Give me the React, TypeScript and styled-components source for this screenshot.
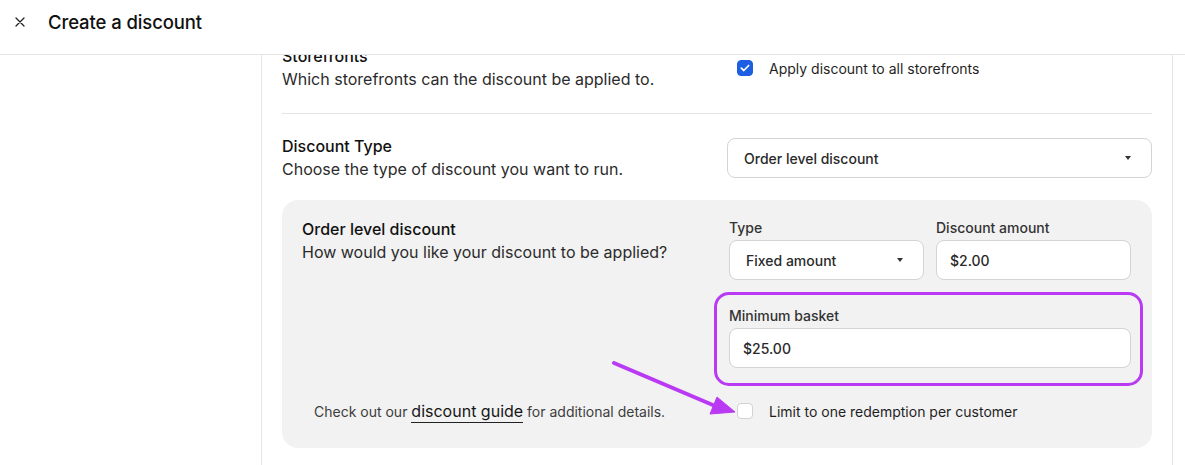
import React from "react";
import styled, { createGlobalStyle } from "styled-components";

const Global = createGlobalStyle`
  * { box-sizing: border-box; }
  html, body { margin: 0; padding: 0; background: #fff; }
  body {
    font-family: Inter, "Noto Sans", "Liberation Sans", sans-serif;
    color: #1a1a1a;
    -webkit-font-smoothing: antialiased;
  }
`;

const Page = styled.div`
  width: 1185px;
  height: 465px;
  overflow: hidden;
  display: flex;
  flex-direction: column;
`;

const Header = styled.header`
  height: 55px;
  flex: none;
  display: flex;
  align-items: flex-start;
  padding: 11px 0 0 14px;
  gap: 22px;
  border-bottom: 1px solid #e6e6e6;
`;

const CloseButton = styled.button`
  width: 12px;
  height: 22px;
  padding: 0;
  border: 0;
  background: none;
  display: flex;
  align-items: center;
  justify-content: center;
  color: #222;
`;

const Title = styled.h1`
  margin: 0;
  font-size: 18.5px;
  line-height: 22px;
  font-weight: 500;
  letter-spacing: -0.1px;
  color: #111;
`;

const Body = styled.div`
  flex: 1;
  display: flex;
  min-height: 0;
`;

const Sidebar = styled.aside`
  width: 262px;
  flex: none;
  border-right: 1px solid #e6e6e6;
`;

const Main = styled.main`
  width: 911px;
  flex: none;
  border-right: 1px solid #e6e6e6;
  padding: 0 20px;
  overflow: hidden;
`;

const Scroll = styled.div`
  margin-top: -32px;
`;

const Section = styled.section<{ $divider?: boolean }>`
  display: grid;
  grid-template-columns: 1fr 425px;
  padding: ${(p) => (p.$divider ? "22px 0 22px" : "21px 0 19px")};
  border-bottom: ${(p) => (p.$divider ? "1px solid #e3e3e3" : "none")};
`;

const TextBlock = styled.div`
  display: flex;
  flex-direction: column;
`;

const SectionTitle = styled.div`
  font-size: 16px;
  line-height: 23px;
  font-weight: 500;
  color: #111;
`;

const SectionText = styled.div`
  font-size: 16px;
  line-height: 23px;
  color: #2b2b2b;
`;

const CheckRow = styled.label<{ $offset?: number; $indent?: number }>`
  display: flex;
  align-items: center;
  gap: 16px;
  height: 24px;
  padding-left: ${(p) => p.$indent ?? 10}px;
  margin-top: ${(p) => p.$offset ?? 0}px;
  font-size: 14px;
  color: #1f1f1f;
`;

const Box = styled.span<{ $checked?: boolean }>`
  width: 16px;
  height: 16px;
  flex: none;
  border-radius: 4px;
  display: flex;
  align-items: center;
  justify-content: center;
  background: ${(p) => (p.$checked ? "#1d5fe3" : "#fff")};
  border: 1px solid ${(p) => (p.$checked ? "#1d5fe3" : "#d2d2d2")};
`;

const SelectBox = styled.div<{ $offset?: number }>`
  height: 40px;
  margin-top: ${(p) => p.$offset ?? 0}px;
  background: #fff;
  border: 1px solid #d4d4d4;
  border-radius: 8px;
  display: flex;
  align-items: center;
  justify-content: space-between;
  padding: 0 20px 0 16px;
  font-size: 14px;
  font-weight: 500;
  color: #2a2a2a;
`;

const Caret = styled.span`
  width: 0;
  height: 0;
  border-left: 3.5px solid transparent;
  border-right: 3.5px solid transparent;
  border-top: 4px solid #333;
`;

const Input = styled.div`
  height: 40px;
  background: #fff;
  border: 1px solid #d4d4d4;
  border-radius: 8px;
  display: flex;
  align-items: center;
  padding: 0 13px;
  font-size: 14px;
  font-weight: 500;
  color: #2a2a2a;
`;

const Panel = styled.div`
  position: relative;
  background: #f2f2f2;
  border-radius: 16px;
  padding: 18px 21px 25px 20px;
  display: grid;
  grid-template-columns: 1fr 402px;
  grid-template-rows: auto auto;
  row-gap: 31px;
`;

const Fields = styled.div`
  display: flex;
  flex-direction: column;
  gap: 26px;
`;

const FieldRow = styled.div`
  display: grid;
  grid-template-columns: 1fr 1fr;
  gap: 12px;
`;

const Field = styled.div`
  position: relative;
  display: flex;
  flex-direction: column;
  gap: 2px;
`;

const Label = styled.div`
  font-size: 14px;
  line-height: 20px;
  font-weight: 500;
  color: #333;
`;

const Highlight = styled.div`
  position: absolute;
  inset: -14px -12px -18px -15px;
  border: 3px solid #b93af2;
  border-radius: 15px;
  pointer-events: none;
`;

const Help = styled.div`
  align-self: center;
  padding-left: 12px;
  font-size: 14px;
  color: #3d3d3d;
`;

const GuideLink = styled.a`
  font-size: 16px;
  color: #161616;
  text-decoration: none;
  border-bottom: 1px solid #222;
  padding-bottom: 1px;
`;

const ArrowOverlay = styled.svg`
  position: absolute;
  left: 320px;
  top: 150px;
  pointer-events: none;
`;

const Check = () => (
  <svg width="10" height="8" viewBox="0 0 10 8" fill="none">
    <path d="M1.3 4.2 L3.8 6.5 L8.7 1.5" stroke="#fff" strokeWidth="1.7" strokeLinecap="round" strokeLinejoin="round" />
  </svg>
);

export default function App() {
  return (
    <>
      <Global />
      <Page>
        <Header>
          <CloseButton aria-label="Close">
            <svg width="10" height="10" viewBox="0 0 10 10">
              <path d="M1 1 L9 9 M9 1 L1 9" stroke="#222" strokeWidth="1.3" strokeLinecap="round" />
            </svg>
          </CloseButton>
          <Title>Create a discount</Title>
        </Header>
        <Body>
          <Sidebar />
          <Main>
            <Scroll>
              <Section $divider>
                <TextBlock>
                  <SectionTitle>Storefronts</SectionTitle>
                  <SectionText>Which storefronts can the discount be applied to.</SectionText>
                </TextBlock>
                <CheckRow $offset={11}>
                  <Box $checked>
                    <Check />
                  </Box>
                  Apply discount to all storefronts
                </CheckRow>
              </Section>
              <Section>
                <TextBlock>
                  <SectionTitle>Discount Type</SectionTitle>
                  <SectionText>Choose the type of discount you want to run.</SectionText>
                </TextBlock>
                <SelectBox $offset={3}>
                  Order level discount
                  <Caret />
                </SelectBox>
              </Section>
              <Panel>
                <TextBlock>
                  <SectionTitle>Order level discount</SectionTitle>
                  <SectionText>How would you like your discount to be applied?</SectionText>
                </TextBlock>
                <Fields>
                  <FieldRow>
                    <Field>
                      <Label>Type</Label>
                      <SelectBox>
                        Fixed amount
                        <Caret />
                      </SelectBox>
                    </Field>
                    <Field>
                      <Label>Discount amount</Label>
                      <Input>$2.00</Input>
                    </Field>
                  </FieldRow>
                  <Field>
                    <Label>Minimum basket</Label>
                    <Input>$25.00</Input>
                    <Highlight />
                  </Field>
                </Fields>
                <Help>
                  Check out our <GuideLink href="#">discount guide</GuideLink> for additional details.
                </Help>
                <CheckRow $indent={8}>
                  <Box />
                  Limit to one redemption per customer
                </CheckRow>
                <ArrowOverlay width="140" height="75" viewBox="0 0 140 75">
                  <path d="M12 13 L112 55.5" stroke="#b93af2" strokeWidth="4" strokeLinecap="round" />
                  <path d="M115 47 L108 64 L133 62 Z" fill="#b93af2" stroke="#b93af2" strokeWidth="1" strokeLinejoin="round" />
                </ArrowOverlay>
              </Panel>
            </Scroll>
          </Main>
        </Body>
      </Page>
    </>
  );
}
